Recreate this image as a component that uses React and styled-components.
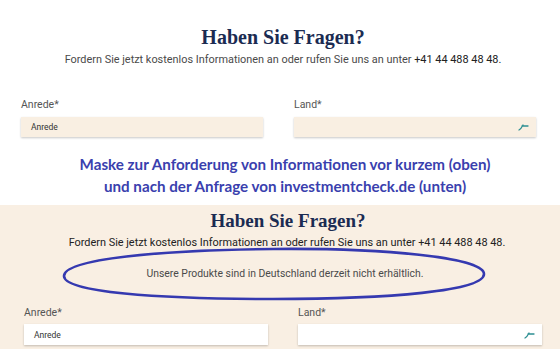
import React from "react";
import styled, { createGlobalStyle } from "styled-components";

const Global = createGlobalStyle`
  html, body { margin: 0; padding: 0; background: #ffffff; }
  body { width: 560px; height: 349px; overflow: hidden; font-family: Roboto, "Liberation Sans", sans-serif; }
`;

const Page = styled.div`
  width: 560px;
  display: flex;
  flex-direction: column;
`;

const Section = styled.section`
  position: relative;
  background: ${(p) => (p.$tinted ? "#f9efe3" : "#ffffff")};
  padding: ${(p) => p.$pad};
  display: flex;
  flex-direction: column;
  align-items: stretch;
`;

const Title = styled.h2`
  margin: 0;
  text-align: center;
  font-family: "Liberation Serif", "DejaVu Serif", serif;
  font-weight: 700;
  font-size: ${(p) => p.$size}px;
  line-height: 22px;
  color: #1b2b52;
  padding-left: ${(p) => p.$shift || 0}px;
`;

const Sub = styled.p`
  margin: ${(p) => p.$mt}px 0 0;
  text-align: center;
  font-family: Roboto, "Liberation Sans", sans-serif;
  font-size: ${(p) => p.$size}px;
  line-height: 14px;
  color: ${(p) => p.$color || "#4a4a4a"};
  padding-left: ${(p) => p.$shift || 0}px;
`;

const Phone = styled.span`
  color: #222;
`;

const Row = styled.div`
  display: grid;
  grid-template-columns: 1fr 1fr;
  column-gap: ${(p) => p.$gap}px;
  margin-top: ${(p) => p.$mt}px;
  padding: 0 ${(p) => p.$right}px 0 ${(p) => p.$left}px;
`;

const Field = styled.div`
  display: flex;
  flex-direction: column;
  gap: ${(p) => p.$gap}px;
`;

const Label = styled.label`
  font-family: Roboto, "Liberation Sans", sans-serif;
  font-size: 10.5px;
  line-height: 12px;
  color: #555;
`;

const Input = styled.div`
  height: ${(p) => p.$h}px;
  background: ${(p) => (p.$white ? "#ffffff" : "#f9efe2")};
  box-shadow: 0 1px 2px rgba(0, 0, 0, 0.22);
  display: flex;
  align-items: center;
  justify-content: space-between;
  padding: 0 7px 0 10px;
  font-family: Roboto, "Liberation Sans", sans-serif;
  font-size: 8.5px;
  color: #333;
`;

const Caption = styled.div`
  margin: 16px 0 8px;
  text-align: center;
  font-family: Lato, "Open Sans", sans-serif;
  font-weight: 700;
  font-size: 15.2px;
  line-height: 22px;
  color: #3a3fae;
  padding-left: 10px;
`;

const NoticeWrap = styled.div`
  position: relative;
  margin-top: 17px;
`;

const Oval = styled.svg`
  position: absolute;
  left: 61px;
  top: -21px;
  width: 425px;
  height: 55px;
  overflow: visible;
`;

const Arrow = () => (
  <svg width="11" height="8" viewBox="0 0 11 8">
    <path d="M1 7 C3 6 4 4 5 2 M4 3 L10 3" stroke="#2c8f92" strokeWidth="1.3" fill="none" strokeLinecap="round" />
  </svg>
);

function Form({ white, mt, left, right, gap, h, labelGap }) {
  return (
    <Row $mt={mt} $left={left} $right={right} $gap={gap}>
      <Field $gap={labelGap}>
        <Label>Anrede*</Label>
        <Input $white={white} $h={h}>Anrede</Input>
      </Field>
      <Field $gap={labelGap}>
        <Label>Land*</Label>
        <Input $white={white} $h={h}>
          <span />
          <Arrow />
        </Input>
      </Field>
    </Row>
  );
}

export default function App() {
  return (
    <Page>
      <Global />
      <Section $pad="26px 0 0">
        <Title $size={20} $shift={6}>Haben Sie Fragen?</Title>
        <Sub $mt={5} $size={10.9} $shift={6}>
          Fordern Sie jetzt kostenlos Informationen an oder rufen Sie uns an unter <Phone>+41 44 488 48 48.</Phone>
        </Sub>
        <Form mt={32} left={21} right={24} gap={31} h={20} labelGap={6} />
      </Section>
      <Caption>
        Maske zur Anforderung von Informationen vor kurzem (oben)
        <br />
        und nach der Anfrage von investmentcheck.de (unten)
      </Caption>
      <Section $tinted $pad="5px 0 8px">
        <Title $size={19} $shift={16}>Haben Sie Fragen?</Title>
        <Sub $mt={4} $size={10.9} $color="#222" $shift={14}>
          Fordern Sie jetzt kostenlos Informationen an oder rufen Sie uns an unter +41 44 488 48 48.
        </Sub>
        <NoticeWrap>
          <Oval viewBox="0 0 425 55" preserveAspectRatio="none">
            <path
              d="M212 3 C320 2 423 11 423 28 C423 45 328 53 212 53 C95 53 3 46 3 30 C3 13 100 4 212 3 Z"
              fill="none"
              stroke="#3539b0"
              strokeWidth="2.6"
            />
          </Oval>
          <Sub $mt={0} $size={10.4} $color="#4a4a4a" $shift={10}>
            Unsere Produkte sind in Deutschland derzeit nicht erhältlich.
          </Sub>
        </NoticeWrap>
        <Form white mt={26} left={24} right={18} gap={30} h={21} labelGap={5} />
      </Section>
    </Page>
  );
}
